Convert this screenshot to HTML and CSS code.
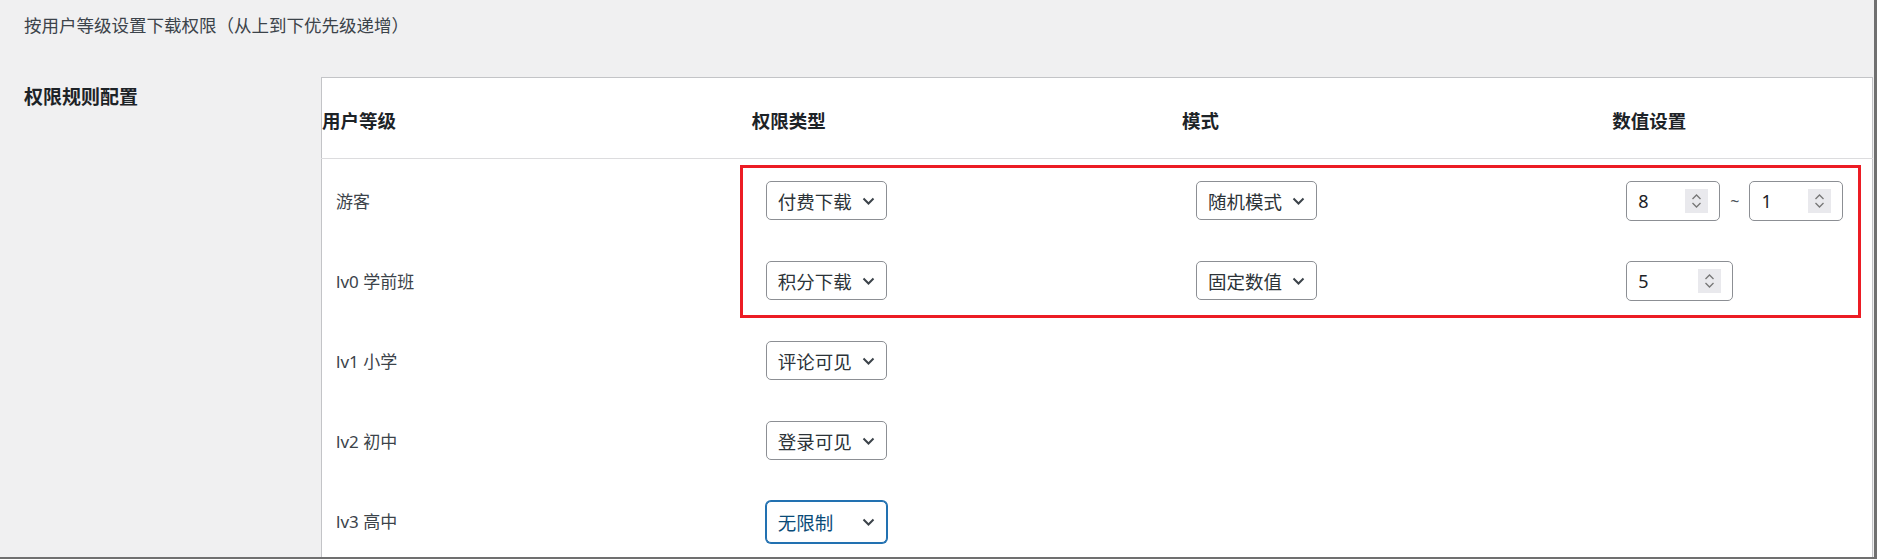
FILE: index.html
```html
<!DOCTYPE html>
<html lang="zh-CN">
<head>
    <meta charset="UTF-8">
    <meta name="viewport" content="width=device-width, initial-scale=1.0">
    <title>下载权限设置</title>
    <link rel="stylesheet" href="styles.css">
</head>
<body>
    <div class="frame">
        <div class="wrap">
            <!-- 说明 -->
            <p class="desc">按用户等级设置下载权限（从上到下优先级递增）</p>

            <div class="field">
                <div class="field-label">权限规则配置</div>
                <div class="field-body">
                    <table class="rules">
                        <colgroup>
                            <col class="col-a">
                            <col class="col-b">
                            <col class="col-c">
                            <col class="col-d">
                        </colgroup>
                        <thead>
                            <tr>
                                <th>用户等级</th>
                                <th>权限类型</th>
                                <th>模式</th>
                                <th>数值设置</th>
                            </tr>
                        </thead>
                        <tbody>
                            <tr>
                                <td class="level">游客</td>
                                <td>
                                    <div class="select">付费下载
                                        <svg class="chev" width="13" height="8" viewBox="0 0 13 8"><path d="M1.5 1.5 L6.5 6.5 L11.5 1.5"/></svg>
                                    </div>
                                </td>
                                <td>
                                    <div class="select">随机模式
                                        <svg class="chev" width="13" height="8" viewBox="0 0 13 8"><path d="M1.5 1.5 L6.5 6.5 L11.5 1.5"/></svg>
                                    </div>
                                </td>
                                <td>
                                    <div class="range">
                                        <div class="num">
                                            <span>8</span>
                                            <svg class="spin" width="23" height="24" viewBox="0 0 23 24"><path d="M7.5 10 L11.5 6 L15.5 10 M7.5 14 L11.5 18 L15.5 14"/></svg>
                                        </div>
                                        <span class="tilde">~</span>
                                        <div class="num">
                                            <span>1</span>
                                            <svg class="spin" width="23" height="24" viewBox="0 0 23 24"><path d="M7.5 10 L11.5 6 L15.5 10 M7.5 14 L11.5 18 L15.5 14"/></svg>
                                        </div>
                                    </div>
                                </td>
                            </tr>
                            <tr>
                                <td class="level">lv0 学前班</td>
                                <td>
                                    <div class="select">积分下载
                                        <svg class="chev" width="13" height="8" viewBox="0 0 13 8"><path d="M1.5 1.5 L6.5 6.5 L11.5 1.5"/></svg>
                                    </div>
                                </td>
                                <td>
                                    <div class="select">固定数值
                                        <svg class="chev" width="13" height="8" viewBox="0 0 13 8"><path d="M1.5 1.5 L6.5 6.5 L11.5 1.5"/></svg>
                                    </div>
                                </td>
                                <td>
                                    <div class="num wide">
                                        <span>5</span>
                                        <svg class="spin" width="23" height="24" viewBox="0 0 23 24"><path d="M7.5 10 L11.5 6 L15.5 10 M7.5 14 L11.5 18 L15.5 14"/></svg>
                                    </div>
                                </td>
                            </tr>
                            <tr>
                                <td class="level">lv1 小学</td>
                                <td>
                                    <div class="select">评论可见
                                        <svg class="chev" width="13" height="8" viewBox="0 0 13 8"><path d="M1.5 1.5 L6.5 6.5 L11.5 1.5"/></svg>
                                    </div>
                                </td>
                                <td></td>
                                <td></td>
                            </tr>
                            <tr>
                                <td class="level">lv2 初中</td>
                                <td>
                                    <div class="select">登录可见
                                        <svg class="chev" width="13" height="8" viewBox="0 0 13 8"><path d="M1.5 1.5 L6.5 6.5 L11.5 1.5"/></svg>
                                    </div>
                                </td>
                                <td></td>
                                <td></td>
                            </tr>
                            <tr>
                                <td class="level">lv3 高中</td>
                                <td>
                                    <div class="select focus">无限制
                                        <svg class="chev" width="13" height="8" viewBox="0 0 13 8"><path d="M1.5 1.5 L6.5 6.5 L11.5 1.5"/></svg>
                                    </div>
                                </td>
                                <td></td>
                                <td></td>
                            </tr>
                        </tbody>
                    </table>
                    <!-- 红框标注 -->
                    <div class="highlight"></div>
                </div>
            </div>
        </div>
    </div>
</body>
</html>
```

FILE: styles.css
```css
body {
    margin: 0;
    padding: 0;
    background-color: #f0f0f1;
    font-family: "Noto Sans", "Noto Sans CJK SC", sans-serif;
    color: #3c434a;
    overflow: hidden;
}
.frame {
    height: 559px;
    box-sizing: border-box;
    border-right: 3px solid #707070;
    border-bottom: 2px solid #707070;
    overflow: hidden;
}
.wrap {
    padding-left: 24px;
}
.desc {
    margin: 0;
    padding-top: 13px;
    font-size: 17.5px;
    line-height: 24px;
    color: #3c434a;
}
.field {
    display: flex;
    margin-top: 40px;
}
.field-label {
    flex: 0 0 297px;
    padding-top: 8px;
    font-size: 19px;
    line-height: 24px;
    font-weight: 700;
    color: #1d2327;
}
.field-body {
    position: relative;
    flex: 0 0 auto;
}
.rules {
    border-collapse: collapse;
    table-layout: fixed;
    width: 1552px;
    background: #fff;
    border: 1px solid #c3c4c7;
}
.col-a,
.col-b,
.col-c {
    width: 430px;
}
.col-d {
    width: 260px;
}
.rules th {
    height: 76px;
    padding: 4px 0 0 0;
    text-align: left;
    font-size: 18.5px;
    font-weight: 700;
    color: #1d2327;
    border-bottom: 1px solid #dcdcde;
}
.rules td {
    height: 77px;
    padding: 3px 14px 0;
    vertical-align: middle;
    font-size: 17px;
}
.rules td.level {
    color: #3c434a;
}
.select {
    display: flex;
    align-items: center;
    justify-content: space-between;
    width: 121px;
    height: 39px;
    box-sizing: border-box;
    padding: 0 11px 0 11px;
    border: 1px solid #8c8f94;
    border-radius: 5px;
    background: #fff;
    font-size: 18.5px;
    color: #2c3338;
}
.chev {
    flex: none;
}
.chev path {
    fill: none;
    stroke: #3c434a;
    stroke-width: 2;
}
.select.focus {
    height: 42px;
    margin-top: 3px;
    border-color: #2271b1;
    box-shadow: 0 0 0 1px #2271b1;
    color: #0a4b78;
}
.range {
    display: flex;
    align-items: center;
}
.tilde {
    margin: 0 10px;
    color: #50575e;
    font-size: 16px;
}
.num {
    display: flex;
    align-items: center;
    justify-content: space-between;
    width: 94px;
    height: 40px;
    box-sizing: border-box;
    padding: 0 11px 0 11px;
    border: 1px solid #8c8f94;
    border-radius: 5px;
    background: #fff;
    font-size: 18px;
    color: #1d2327;
}
.num.wide {
    width: 107px;
}
.spin {
    flex: none;
    background: #e9e9ed;
}
.spin path {
    fill: none;
    stroke: #767676;
    stroke-width: 1.3;
}
.highlight {
    position: absolute;
    left: 419px;
    top: 88px;
    width: 1121px;
    height: 153px;
    box-sizing: border-box;
    border: 3px solid #ec1c24;
    pointer-events: none;
}
```
